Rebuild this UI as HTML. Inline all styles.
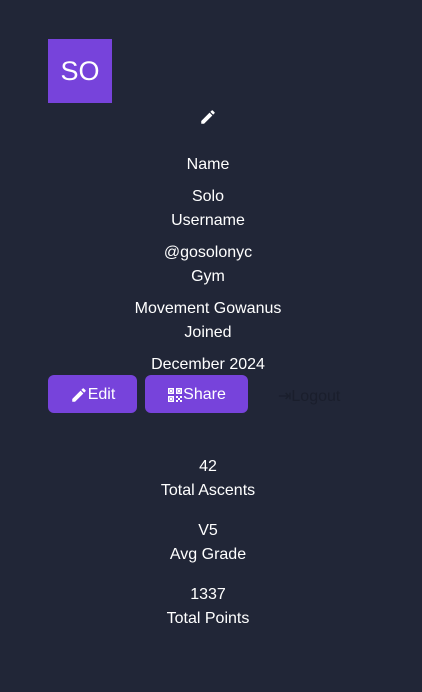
<!DOCTYPE html>
<html><head><style>
body{margin:0;width:422px;height:692px;background:#212637;font-family:"Liberation Sans",sans-serif;color:#fff;position:relative;overflow:hidden}
.t{position:absolute;left:0;width:416px;text-align:center;font-size:16px;line-height:20px}
.av{position:absolute;left:48px;top:39px;width:64px;height:64px;background:#7743db;color:#fff;font-size:27px;display:flex;align-items:center;justify-content:center}
.btn{position:absolute;top:375px;height:38px;background:#7743db;border-radius:6px;display:flex;align-items:center;justify-content:center;font-size:16px;color:#fff;padding-top:2px;box-sizing:border-box}
</style></head><body>
<div class="av">SO</div>
<svg style="position:absolute;left:199px;top:108px" width="18" height="18" viewBox="0 0 24 24"><path fill="#fff" d="M3 17.25V21h3.75L17.81 9.94l-3.75-3.75L3 17.25zM20.71 7.04a1 1 0 000-1.41l-2.34-2.34a1 1 0 00-1.41 0l-1.83 1.83 3.75 3.75 1.83-1.83z"/></svg>
<div class="t" style="top:155px">Name</div>
<div class="t" style="top:187px">Solo</div>
<div class="t" style="top:211px">Username</div>
<div class="t" style="top:243px">@gosolonyc</div>
<div class="t" style="top:267px">Gym</div>
<div class="t" style="top:299px">Movement Gowanus</div>
<div class="t" style="top:323px">Joined</div>
<div class="t" style="top:355px">December 2024</div>
<div class="btn" style="left:48px;width:89px"><svg width="18" height="18" viewBox="0 0 24 24"><path fill="#fff" d="M3 17.25V21h3.75L17.81 9.94l-3.75-3.75L3 17.25zM20.71 7.04a1 1 0 000-1.41l-2.34-2.34a1 1 0 00-1.41 0l-1.83 1.83 3.75 3.75 1.83-1.83z"/></svg>Edit</div>
<div class="btn" style="left:145px;width:103px"><svg width="16" height="16" viewBox="0 0 16 16" fill="#fff"><path d="M1 1h6v6H1zM2.5 2.5v3h3v-3zM9 1h6v6H9zM10.5 2.5v3h3v-3zM1 9h6v6H1zM2.5 10.5v3h3v-3zM9 9h2v2H9zM13 9h2v2h-2zM11 11h2v2h-2zM9 13h2v2H9zM13 13h2v2h-2zM3 3h2v2H3zM11 3h2v2h-2zM3 11h2v2H3z" fill-rule="evenodd"/></svg>Share</div>
<div style="position:absolute;left:278px;top:386px;font-size:16px;color:#1a1e2c">⇥Logout</div>
<div class="t" style="top:457px">42</div>
<div class="t" style="top:481px">Total Ascents</div>
<div class="t" style="top:521px">V5</div>
<div class="t" style="top:545px">Avg Grade</div>
<div class="t" style="top:585px">1337</div>
<div class="t" style="top:609px">Total Points</div>
</body></html>
